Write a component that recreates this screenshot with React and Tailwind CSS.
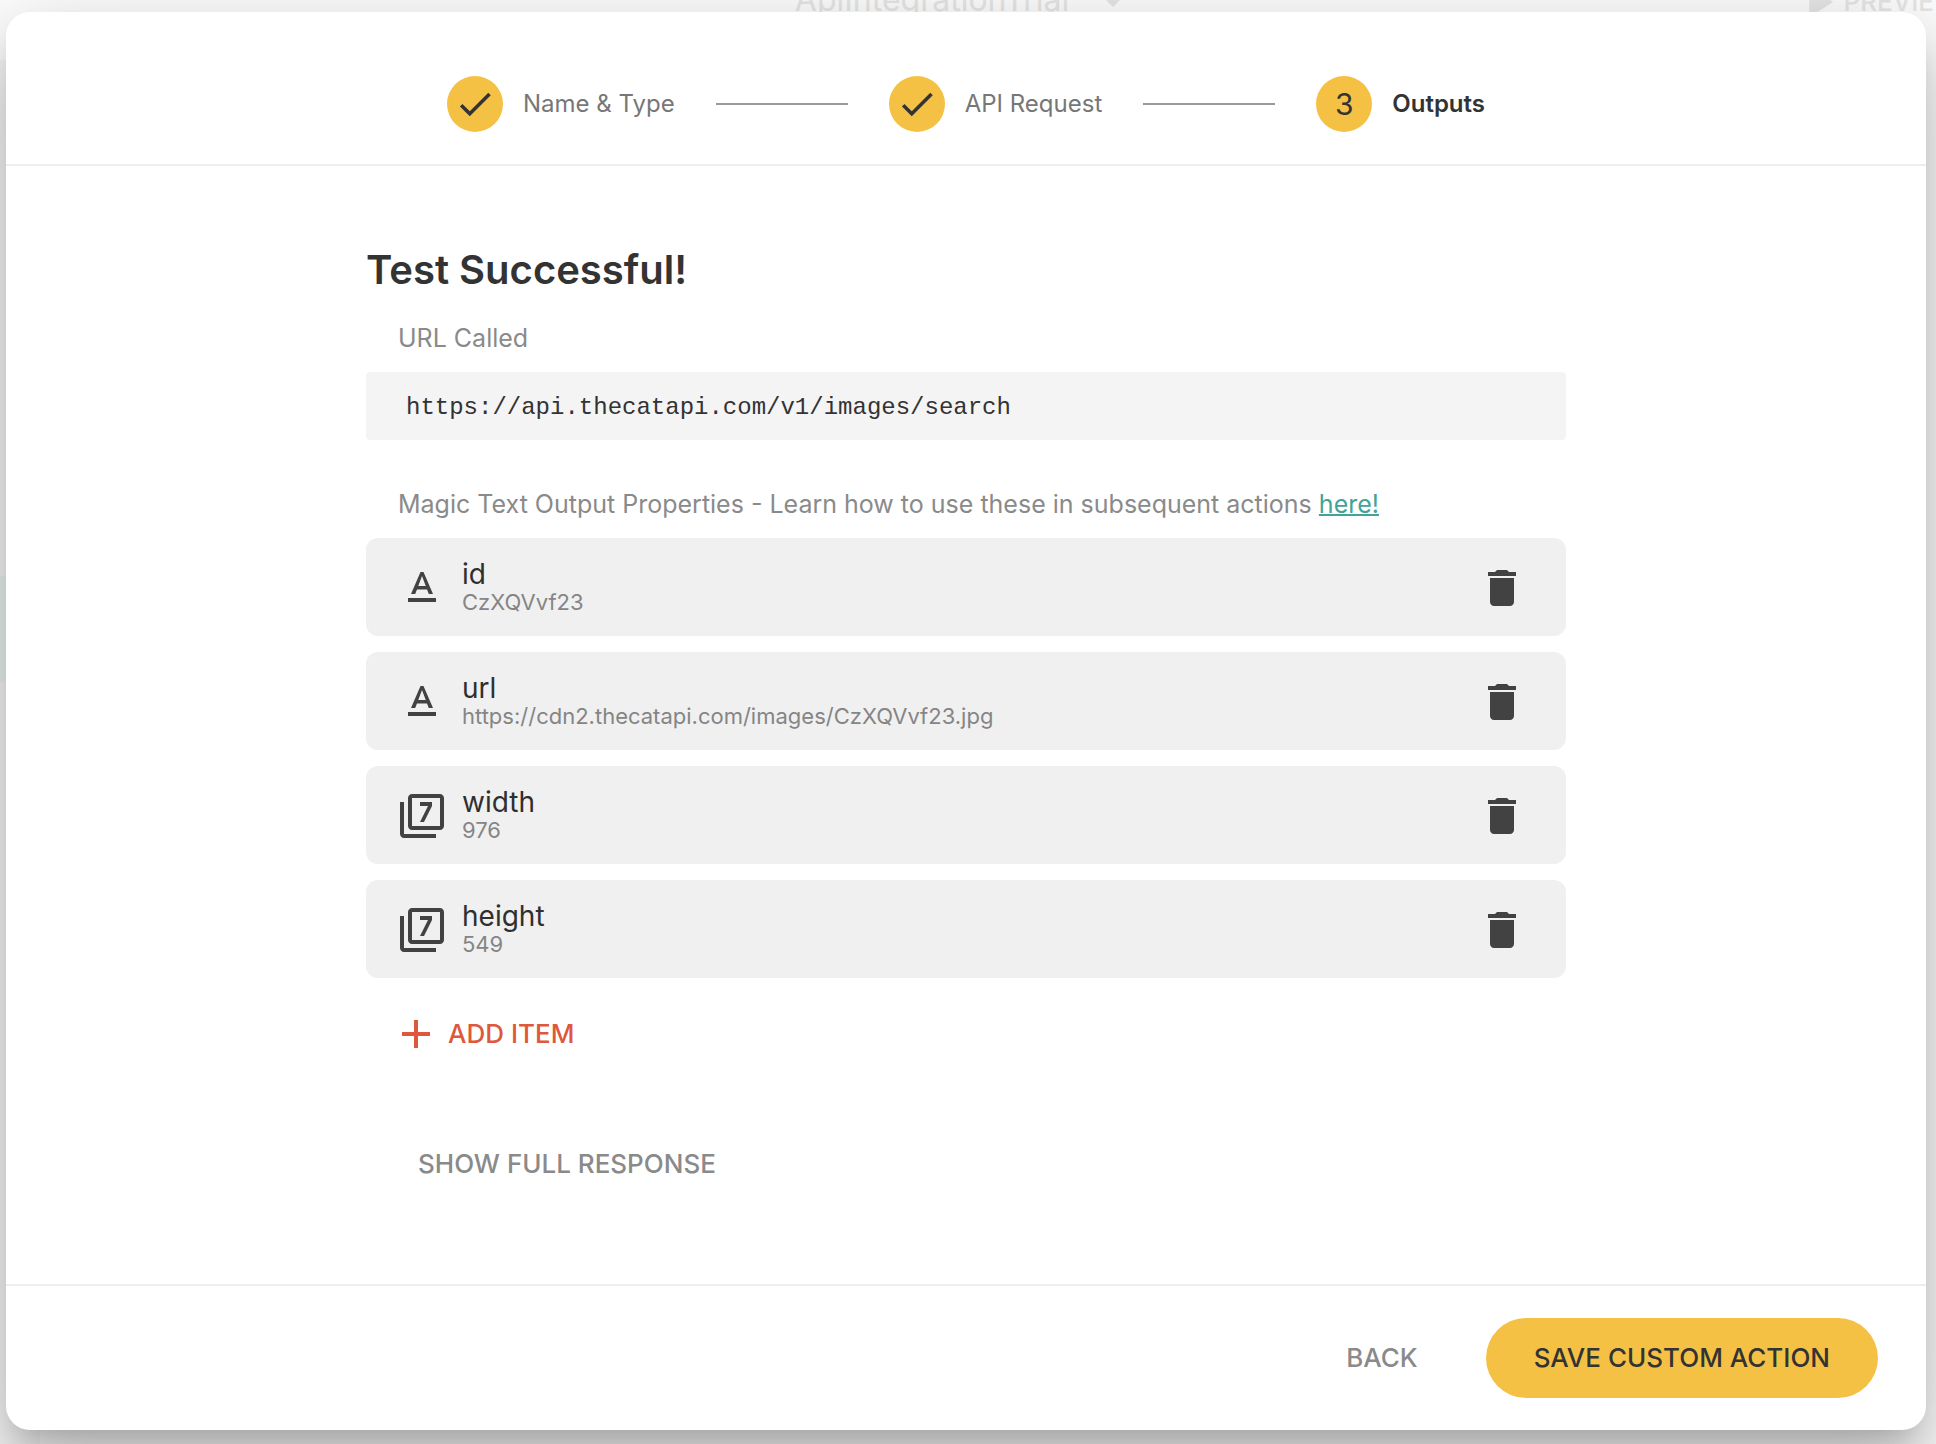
import React from "react";
import { MdAdd, MdArrowDropDown, MdCheck, MdDelete, MdFilter7, MdPlayArrow, MdTextFormat } from "react-icons/md";

const steps = [
  { number: 1, label: "Name & Type", done: true },
  { number: 2, label: "API Request", done: true },
  { number: 3, label: "Outputs", done: false },
];

const outputs = [
  { name: "id", value: "CzXQVvf23", Icon: MdTextFormat },
  { name: "url", value: "https://cdn2.thecatapi.com/images/CzXQVvf23.jpg", Icon: MdTextFormat },
  { name: "width", value: "976", Icon: MdFilter7 },
  { name: "height", value: "549", Icon: MdFilter7 },
];

function Backdrop() {
  return (
    <div aria-hidden="true" className="flex h-full flex-col">
      <div className="grid h-[60px] shrink-0 grid-cols-[1fr_auto_1fr] items-start">
        <div />
        <div className="-mt-7 flex items-center gap-4 text-[32px] leading-14 text-[#e8e8e8]">
          <span>ApiIntegrationTrial</span>
          <MdArrowDropDown size={56} />
        </div>
        <div className="-mt-6 -mr-6 flex items-center justify-self-end text-[26px] leading-10 font-medium text-[#e8e8e8]">
          <MdPlayArrow size={52} />
          <span>PREVIEW</span>
        </div>
      </div>
      <div className="w-10 flex-1 bg-[#fafafa] pt-[516px]">
        <div className="h-[106px] bg-[#edf8f6]" />
      </div>
    </div>
  );
}

function Stepper() {
  return (
    <ol className="flex items-center justify-center gap-[41px]">
      {steps.map((step, i) => (
        <React.Fragment key={step.number}>
          {i > 0 && <li aria-hidden="true" className="h-[2px] w-[132px] bg-[#9a9a9a]" />}
          <li className="flex items-center gap-5">
            <span className="flex size-14 items-center justify-center rounded-full bg-[#f5c144] text-[30px] leading-8 text-[#333]">
              {step.done ? <MdCheck size={42} /> : step.number}
            </span>
            <span
              className={
                step.done
                  ? "text-2xl leading-8 whitespace-nowrap text-[#777]"
                  : "text-2xl leading-8 font-semibold whitespace-nowrap text-[#333]"
              }
            >
              {step.label}
            </span>
          </li>
        </React.Fragment>
      ))}
    </ol>
  );
}

function OutputRow({ name, value, Icon }) {
  return (
    <li className="flex min-h-[98px] items-center gap-4 rounded-xl bg-[#f0f0f0] pt-[2px] pr-10 pl-8">
      <Icon size={48} className="shrink-0 text-[#424242]" />
      <div className="min-w-0 flex-1">
        <p className="text-[28px] leading-7 text-[#2f2f2f]">{name}</p>
        <p className="truncate text-[22px] leading-7 text-[#858585]">{value}</p>
      </div>
      <button type="button" aria-label={`Delete ${name}`} className="shrink-0 text-[#424242]">
        <MdDelete size={48} />
      </button>
    </li>
  );
}

export default function App() {
  return (
    <div className="relative h-screen overflow-hidden bg-white font-['Inter',sans-serif]">
      <Backdrop />
      <div className="absolute inset-0 flex pt-3 pr-[10px] pb-[14px] pl-[6px]">
        <section
          role="dialog"
          aria-label="Custom action"
          className="flex min-w-0 flex-1 flex-col rounded-3xl bg-white shadow-[0_22px_30px_-14px_rgba(0,0,0,0.2),0_48px_76px_6px_rgba(0,0,0,0.14),0_18px_92px_16px_rgba(0,0,0,0.12)]"
        >
          <header className="border-b-2 border-[#eee] pt-16 pb-8">
            <Stepper />
          </header>

          <main className="mx-auto w-full max-w-[1200px] flex-1 pt-20">
            <h1 className="text-[40px] leading-12 font-semibold text-[#333]">Test Successful!</h1>
            <p className="mt-7 pl-8 text-[25px] leading-8 text-[#8a8a8a]">URL Called</p>
            <div className="mt-[18px] rounded bg-[#f4f4f4] px-10 pt-5 pb-4">
              <code className="block font-['Liberation_Mono',monospace] text-2xl leading-8 text-[#333]">
                https://api.thecatapi.com/v1/images/search
              </code>
            </div>
            <p className="mt-12 pl-8 text-[25px] leading-8 text-[#8a8a8a]">
              Magic Text Output Properties - Learn how to use these in subsequent actions{" "}
              <a href="#learn" className="text-[#43a398] underline decoration-2">
                here!
              </a>
            </p>
            <ul className="mt-[18px] flex flex-col gap-4">
              {outputs.map((o) => (
                <OutputRow key={o.name} {...o} />
              ))}
            </ul>
            <button
              type="button"
              className="mt-8 ml-[26px] flex items-center gap-2 text-[26px] leading-8 font-medium text-[#de583c]"
            >
              <MdAdd size={48} />
              ADD ITEM
            </button>
            <button
              type="button"
              className="mt-[82px] ml-[52px] block text-[26px] leading-12 font-medium text-[#8a8a8a]"
            >
              SHOW FULL RESPONSE
            </button>
          </main>

          <footer className="flex items-center justify-end gap-[68px] border-t-2 border-[#eee] py-8 pr-12">
            <button type="button" className="text-[26px] leading-8 font-medium text-[#8a8a8a]">
              BACK
            </button>
            <button
              type="button"
              className="rounded-full bg-[#f5c144] px-12 py-6 text-[26px] leading-8 font-medium text-[#333]"
            >
              SAVE CUSTOM ACTION
            </button>
          </footer>
        </section>
      </div>
    </div>
  );
}
